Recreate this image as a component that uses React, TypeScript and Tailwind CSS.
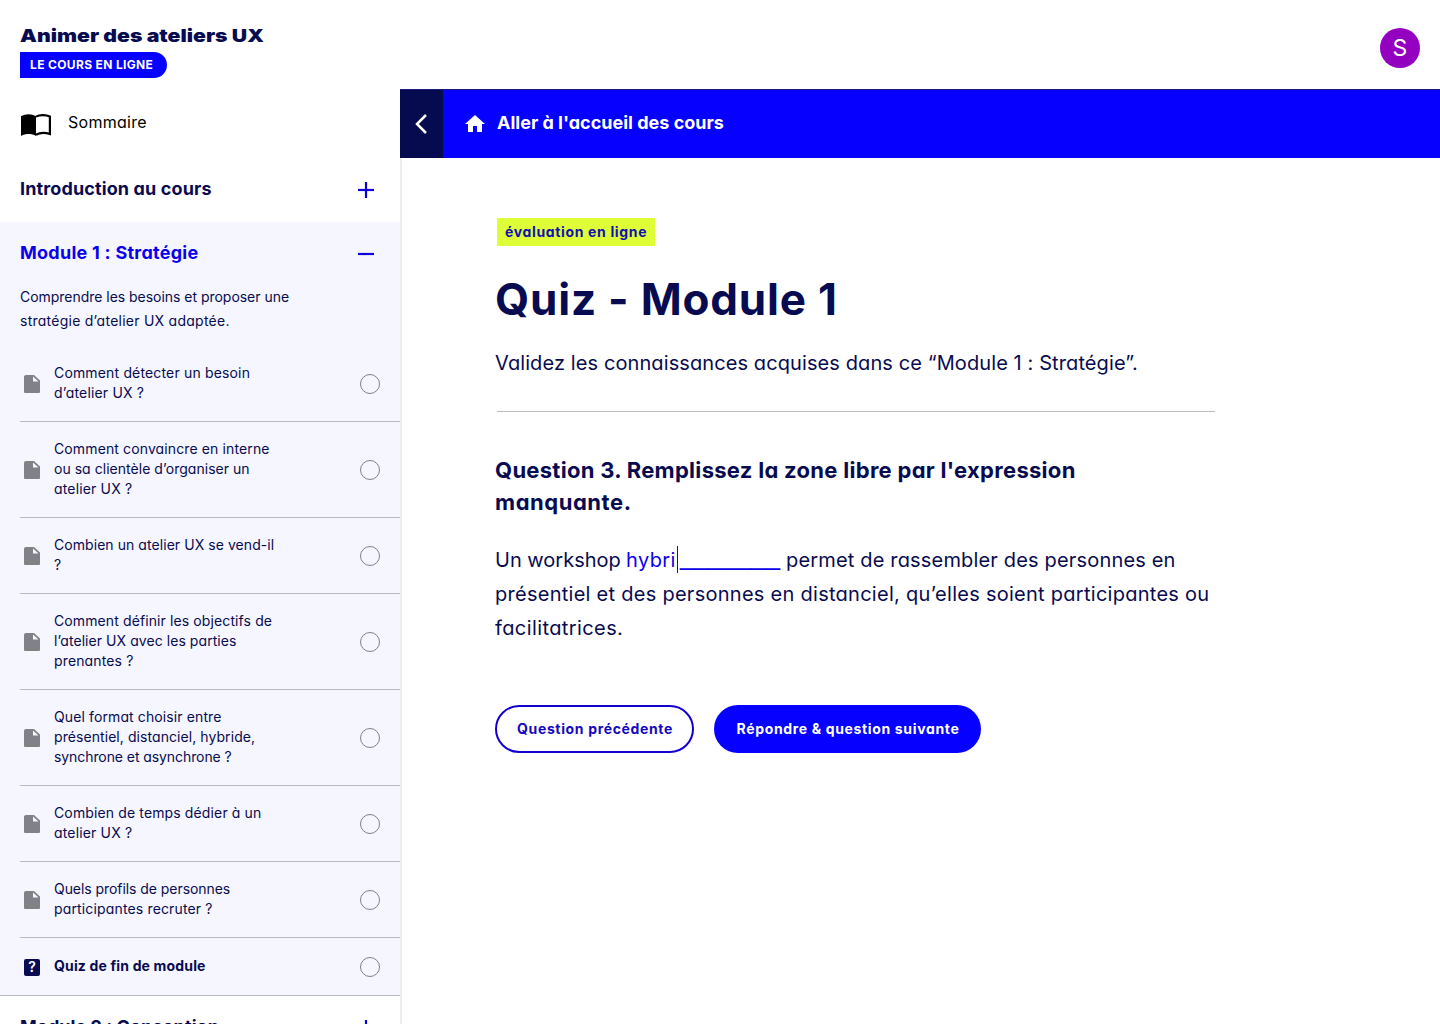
import React from "react";

type Line = { text: string; cls: string };

const lessons: Line[][] = [
  [
    { text: "Comment détecter un besoin", cls: "tracking-[0.16px]" },
    { text: "d’atelier UX ?", cls: "tracking-[0.17px]" },
  ],
  [
    { text: "Comment convaincre en interne", cls: "tracking-[0.12px]" },
    { text: "ou sa clientèle d’organiser un", cls: "tracking-[0.03px]" },
    { text: "atelier UX ?", cls: "tracking-[0.16px]" },
  ],
  [
    { text: "Combien un atelier UX se vend-il", cls: "tracking-[0.06px]" },
    { text: "?", cls: "tracking-normal" },
  ],
  [
    { text: "Comment définir les objectifs de", cls: "tracking-[0.11px]" },
    { text: "l’atelier UX avec les parties", cls: "tracking-[0.06px]" },
    { text: "prenantes ?", cls: "tracking-[0.14px]" },
  ],
  [
    { text: "Quel format choisir entre", cls: "tracking-[0.11px]" },
    { text: "présentiel, distanciel, hybride,", cls: "tracking-[0.07px]" },
    { text: "synchrone et asynchrone ?", cls: "tracking-[-0.08px]" },
  ],
  [
    { text: "Combien de temps dédier à un", cls: "tracking-[0.13px]" },
    { text: "atelier UX ?", cls: "tracking-[0.16px]" },
  ],
  [
    { text: "Quels profils de personnes", cls: "tracking-[-0.06px]" },
    { text: "participantes recruter ?", cls: "tracking-[0.15px]" },
  ],
];

function BookIcon() {
  return (
    <svg className="mt-1 h-[22px] w-[30px] shrink-0" viewBox="0 0 30 22">
      <path d="M0 2.2C4.6-.5 10.6-.5 15 2.2V22C10.6 19.4 4.6 19.4 0 22Z" fill="#000" />
      <path d="M15 2.6C18.6.7 24.6.5 28.9 2.6V20C24.6 18.6 18.6 18.6 15 20.8" fill="none" stroke="#000" strokeWidth="2.2" />
    </svg>
  );
}

function DocIcon() {
  return (
    <svg className="ml-1 h-[18.5px] w-4 shrink-0" viewBox="4 2 16 20" preserveAspectRatio="none">
      <path
        d="M6 2c-1.100 0-1.990.900-1.990 2L4 20c0 1.100.890 2 1.990 2H18c1.100 0 2-.900 2-2V8l-6-6H6zm7 7V3.500L18.500 9H13z"
        fill="#808285"
      />
    </svg>
  );
}

function Toggle({ open }: { open?: boolean }) {
  return (
    <svg className="h-[18px] w-[18px]" viewBox="0 0 18 18" stroke="#0a00dc" strokeWidth="2.2">
      <path d="M1 9H17" />
      {!open && <path d="M9 1V17" />}
    </svg>
  );
}

function Heading({ text, cls, open }: { text: string; cls: string; open?: boolean }) {
  return (
    <div className="flex h-16 shrink-0 items-center justify-between pl-5 pr-[25px]">
      <h2 className={`pb-0.5 text-[18px] leading-6 font-bold whitespace-nowrap ${cls}`}>{text}</h2>
      <Toggle open={open} />
    </div>
  );
}

function Circle() {
  return <span className="ml-auto mr-5 h-5 w-5 shrink-0 rounded-full border border-[#80818f]" />;
}

export default function App() {
  return (
    <div className="flex h-[1024px] w-[1440px] overflow-hidden bg-white font-['Inter',sans-serif] text-[#080b50] [font-feature-settings:'cv11']">
      <aside className="flex w-[400px] shrink-0 flex-col">
        <div className="shrink-0 pt-[26px] pl-5">
          <div className="h-[19px] w-max origin-left scale-x-[1.18] text-[18px] leading-[19px] font-black whitespace-nowrap [font-feature-settings:normal]">
            Animer des ateliers UX
          </div>
          <div className="mt-[7px] flex h-[26px] w-[147px] items-center rounded-r-full bg-[#0500ff] pl-2.5 text-[12px] font-bold tracking-[0.35px] whitespace-nowrap text-white">
            LE COURS EN LIGNE
          </div>
        </div>
        <div className="mt-8 flex h-12 shrink-0 items-start pl-[21px] text-black">
          <BookIcon />
          <span className="ml-[17px] text-[16px] leading-6 tracking-[0.28px]">Sommaire</span>
        </div>
        <Heading text="Introduction au cours" cls="tracking-[0.13px]" />
        <section className="shrink-0 border-b border-[#b9bac6] bg-[#f5f6ff]">
          <Heading text="Module 1 : Stratégie" cls="tracking-[0.26px] text-[#0a00ee]" open />
          <p className="-mt-px mb-[13px] pl-5 text-[14px] leading-6 whitespace-nowrap">
            <span className="block tracking-[-0.03px]">Comprendre les besoins et proposer une</span>
            <span className="block tracking-[0.25px]">stratégie d’atelier UX adaptée.</span>
          </p>
          <ul className="pl-5">
            {lessons.map((lines, i) => (
              <li key={i} className="flex items-center border-b border-[#b9bac6] pt-[18px] pb-[17px]">
                <DocIcon />
                <span className="-mt-px mb-px ml-3.5 text-[14px] leading-5 whitespace-nowrap">
                  {lines.map((l) => (
                    <span key={l.text} className={`block ${l.cls}`}>
                      {l.text}
                    </span>
                  ))}
                </span>
                <Circle />
              </li>
            ))}
            <li className="flex items-center pt-[19px] pb-[18px]">
              <span className="ml-1 flex h-[17px] w-4 items-center justify-center rounded-[2px] bg-[#080b50] text-[14px] leading-none font-semibold text-white">
                ?
              </span>
              <span className="-mt-0.5 ml-3.5 text-[14px] leading-5 font-bold tracking-[0.16px] whitespace-nowrap">
                Quiz de fin de module
              </span>
              <Circle />
            </li>
          </ul>
        </section>
        <Heading text="Module 2 : Conception" cls="tracking-[0.04px]" />
      </aside>

      <div className="flex min-w-0 flex-1 flex-col">
        <header className="flex h-[89px] shrink-0 justify-end pt-7 pr-5">
          <div className="flex h-10 w-10 items-center justify-center rounded-full bg-[#9400c0] text-[23px] text-white">
            S
          </div>
        </header>
        <nav className="flex h-[69px] shrink-0 items-stretch border-t border-[#1c1a80] bg-[#0500ff] text-white">
          <div className="flex w-[43px] items-center justify-center bg-[#060b4f] pr-0.5">
            <svg className="h-5 w-3" viewBox="0 0 12 20" fill="none" stroke="#fff" strokeWidth="2.5">
              <path d="M11 1L2 10L11 19" />
            </svg>
          </div>
          <div className="flex items-center pl-5">
            <svg className="h-6 w-6" viewBox="0 0 24 24" fill="#fff">
              <path d="M10 20v-6h4v6h5v-8h3L12 3 2 12h3v8z" />
            </svg>
            <span className="ml-2.5 pb-0.5 text-[18px] leading-6 font-bold whitespace-nowrap">
              Aller à l'accueil des cours
            </span>
          </div>
        </nav>
        <main className="flex-1 border-l-2 border-[#ececf1] pl-[93px]">
          <div className="mt-[60px] ml-0.5 flex h-7 w-[158px] items-center bg-[#deff37] pb-0.5 pl-2 text-[14px] font-bold tracking-[0.65px] whitespace-nowrap text-[#1310b0]">
            évaluation en ligne
          </div>
          <h1 className="mt-[25px] text-[44px] leading-[56px] font-bold tracking-[0.8px] whitespace-nowrap">
            Quiz - Module 1
          </h1>
          <p className="mt-[22px] text-[20px] leading-7 tracking-[0.1px] whitespace-nowrap">
            Validez les connaissances acquises dans ce “Module 1 : Stratégie”.
          </p>
          <hr className="mt-[34px] ml-0.5 w-[718px] border-t border-[#b9bdc4]" />
          <h3 className="mt-[42px] text-[22px] leading-8 font-bold whitespace-nowrap">
            <span className="block tracking-[0.29px]">Question 3. Remplissez la zone libre par l'expression</span>
            <span className="block tracking-[0.55px]">manquante.</span>
          </h3>
          <div className="mt-[25px] text-[20px] leading-[34px] whitespace-nowrap">
            <div className="flex h-[34px]">
              <span className="w-[131px]">Un workshop</span>
              <span className="w-[51px] tracking-[0.4px] text-[#0a00ee]">hybri</span>
              <span className="mt-[3px] h-[27px] w-px bg-[#1a0f9c]" />
              <span className="-mt-0.5 ml-0.5 h-[30px] w-[100px] font-['Liberation_Sans'] text-[25.7px] leading-[30px] text-[#0a00ee]">
                _______
              </span>
              <span className="ml-[6px] tracking-[0.17px]">permet de rassembler des personnes en</span>
            </div>
            <div className="tracking-[0.27px]">
              présentiel et des personnes en distanciel, qu’elles soient participantes ou
            </div>
            <div className="tracking-[0.4px]">facilitatrices.</div>
          </div>
          <div className="mt-[60px] flex gap-5 text-[14px] font-bold tracking-[0.65px] whitespace-nowrap">
            <button className="h-12 w-[199px] rounded-full border-2 border-[#1100d0] bg-white pb-0.5 pl-px text-[#1508c0]">
              Question précédente
            </button>
            <button className="h-12 w-[267px] rounded-full bg-[#0500ff] pb-0.5 pl-px text-white">
              Répondre &amp; question suivante
            </button>
          </div>
        </main>
      </div>
    </div>
  );
}
